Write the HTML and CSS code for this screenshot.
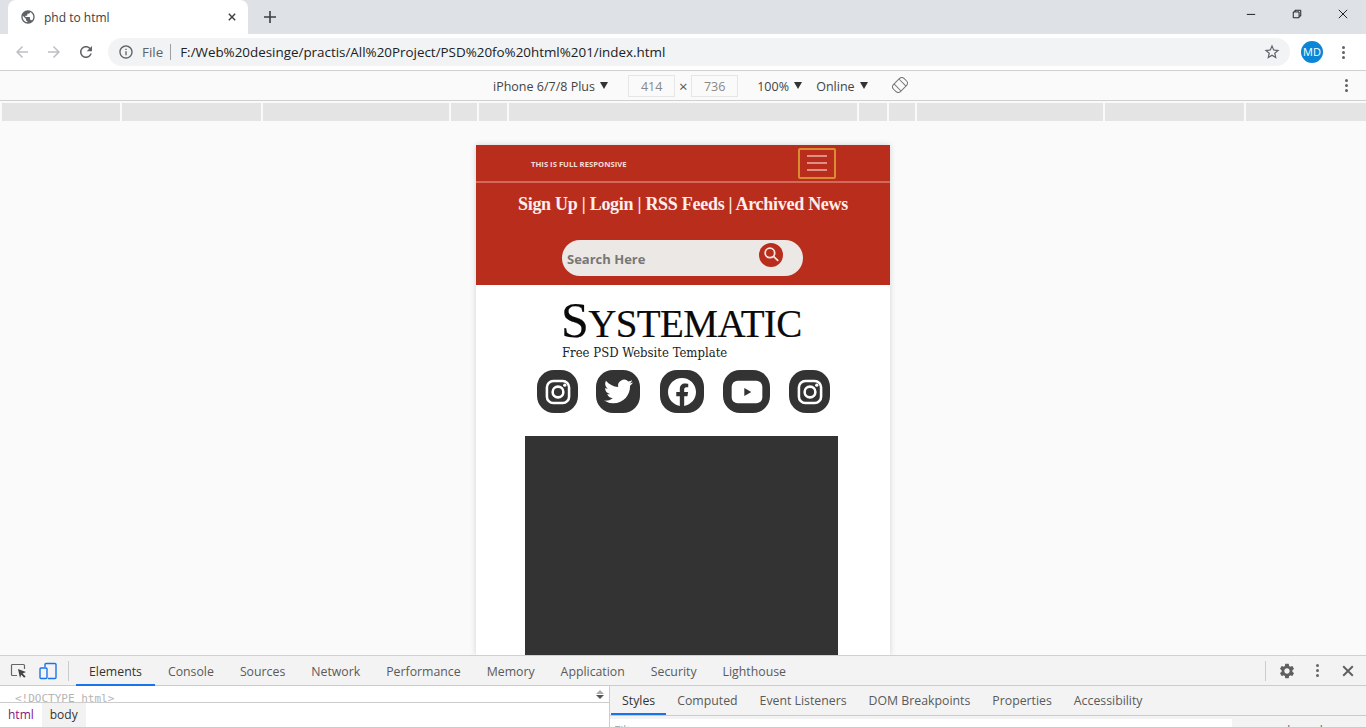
FILE: index.html
```html
<!DOCTYPE html>
<html lang="en">
<head>
  <meta charset="UTF-8" />
  <title>phd to html</title>
  <link rel="stylesheet" href="styles.css">
</head>
<body>
  <!-- browser tab strip -->
  <div class="tabstrip">
    <div class="tab">
      <svg class="tab-globe" viewBox="0 0 24 24"><path d="M12 2C6.48 2 2 6.48 2 12s4.48 10 10 10 10-4.48 10-10S17.52 2 12 2zm-1 17.93c-3.95-.49-7-3.85-7-7.93 0-.62.08-1.21.21-1.79L9 15v1c0 1.1.9 2 2 2v1.93zm6.9-2.54c-.26-.81-1-1.39-1.9-1.39h-1v-3c0-.55-.45-1-1-1H8v-2h2c.55 0 1-.45 1-1V7h2c1.1 0 2-.9 2-2v-.41c2.93 1.19 5 4.06 5 7.41 0 2.08-.8 3.97-2.1 5.39z"/></svg>
      <span class="tab-title">phd to html</span>
      <svg class="tab-close" viewBox="0 0 10 10"><path d="M1 1l8 8M9 1l-8 8"/></svg>
    </div>
    <svg class="tab-new" viewBox="0 0 12 12"><path d="M6 0v12M0 6h12"/></svg>
    <div class="win-btns">
      <svg viewBox="0 0 12 12"><path d="M1 6.5h10"/></svg>
      <svg viewBox="0 0 12 12"><path d="M1.5 3.5h7v7h-7zM3.5 3.5v-2h7v7h-2"/></svg>
      <svg viewBox="0 0 12 12"><path d="M1 1l10 10M11 1L1 11"/></svg>
    </div>
  </div>

  <!-- address bar -->
  <div class="toolbar">
    <svg class="nav-icon off" viewBox="0 0 24 24"><path d="M20 11H7.83l5.59-5.59L12 4l-8 8 8 8 1.41-1.41L7.83 13H20v-2z"/></svg>
    <svg class="nav-icon off" viewBox="0 0 24 24"><path d="M12 4l-1.41 1.41L16.17 11H4v2h12.17l-5.58 5.59L12 20l8-8z"/></svg>
    <svg class="nav-icon" viewBox="0 0 24 24"><path d="M17.65 6.35C16.2 4.9 14.21 4 12 4c-4.42 0-7.99 3.58-7.99 8s3.57 8 7.99 8c3.73 0 6.84-2.55 7.73-6h-2.08c-.82 2.33-3.04 4-5.65 4-3.31 0-6-2.69-6-6s2.69-6 6-6c1.66 0 3.14.69 4.22 1.78L13 11h7V4l-2.35 2.35z"/></svg>
    <div class="omnibox">
      <svg class="omni-info" viewBox="0 0 24 24"><path d="M11 7h2v2h-2zm0 4h2v6h-2zm1-9C6.48 2 2 6.48 2 12s4.48 10 10 10 10-4.48 10-10S17.52 2 12 2zm0 18c-4.41 0-8-3.59-8-8s3.59-8 8-8 8 3.59 8 8-3.59 8-8 8z"/></svg>
      <span class="omni-file">File</span>
      <span class="omni-url">F:/Web%20desinge/practis/All%20Project/PSD%20fo%20html%201/index.html</span>
      <svg class="omni-star" viewBox="0 0 24 24"><path d="M22 9.24l-7.19-.62L12 2 9.19 8.63 2 9.24l5.46 4.73L5.82 21 12 17.27 18.18 21l-1.63-7.03L22 9.24zM12 15.4l-3.76 2.27 1-4.28-3.32-2.88 4.38-.38L12 6.1l1.71 4.04 4.38.38-3.32 2.88 1 4.28L12 15.4z"/></svg>
    </div>
    <div class="avatar">MD</div>
    <div class="kebab"><i></i><i></i><i></i></div>
  </div>

  <!-- device toolbar -->
  <div class="devicebar">
    <span class="dev-item dev-name">iPhone 6/7/8 Plus <b class="caret"></b></span>
    <span class="dim-box">414</span>
    <span class="dim-x">×</span>
    <span class="dim-box">736</span>
    <span class="dev-item dev-zoom">100% <b class="caret"></b></span>
    <span class="dev-item dev-net">Online <b class="caret"></b></span>
    <svg class="rotate" viewBox="0 0 16 16"><g transform="rotate(45 8 8)"><rect x="3" y="0.5" width="10" height="15" rx="3.5"/><path d="M3 4.5h10M3 11.5h10"/></g></svg>
    <div class="kebab dev-kebab"><i></i><i></i><i></i></div>
  </div>

  <!-- media query ruler -->
  <div class="ruler">
    <i></i><i></i><i></i><i></i><i></i><i></i><i></i><i></i><i></i><i></i><i></i>
  </div>

  <!-- emulated page -->
  <div class="viewport">
    <div class="phone">
      <header class="site-head">
        <div class="topline">
          <span class="topline-text">THIS IS FULL RESPONSIVE</span>
          <button class="burger"><i></i><i></i><i></i></button>
        </div>
        <nav class="site-links">Sign Up | Login | RSS Feeds | Archived News</nav>
        <div class="search">
          <span class="search-text">Search Here</span>
          <span class="search-btn">
            <svg viewBox="0 0 24 24"><circle cx="10" cy="10" r="6"/><path d="M14.5 14.5l6 5.5"/></svg>
          </span>
        </div>
      </header>

      <div class="brand">
        <div class="brand-name"><span class="brand-cap">S</span>YSTEMATIC</div>
        <div class="brand-sub">Free PSD Website Template</div>
      </div>

      <div class="socials">
        <span class="soc soc-insta">
          <svg viewBox="0 0 24 24"><rect x="2.5" y="2.5" width="19" height="19" rx="5.5" class="ln"/><circle cx="12" cy="12" r="4.6" class="ln"/><circle cx="17.8" cy="6.2" r="1.4" class="fl"/></svg>
        </span>
        <span class="soc soc-tw">
          <svg viewBox="0 0 24 24"><path class="fl" d="M23.953 4.57a10 10 0 01-2.825.775 4.958 4.958 0 002.163-2.723c-.951.555-2.005.959-3.127 1.184a4.92 4.92 0 00-8.384 4.482C7.69 8.095 4.067 6.13 1.64 3.162a4.822 4.822 0 00-.666 2.475c0 1.71.87 3.213 2.188 4.096a4.904 4.904 0 01-2.228-.616v.06a4.923 4.923 0 003.946 4.827 4.996 4.996 0 01-2.212.085 4.936 4.936 0 004.604 3.417 9.867 9.867 0 01-6.102 2.105c-.39 0-.779-.023-1.17-.067a13.995 13.995 0 007.557 2.209c9.053 0 13.998-7.496 13.998-13.985 0-.21 0-.42-.015-.63A9.935 9.935 0 0024 4.59z"/></svg>
        </span>
        <span class="soc soc-fb">
          <svg viewBox="0 0 24 24"><path class="fl" d="M24 12.073c0-6.627-5.373-12-12-12s-12 5.373-12 12c0 5.99 4.388 10.954 10.125 11.854v-8.385H7.078v-3.47h3.047V9.43c0-3.007 1.792-4.669 4.533-4.669 1.312 0 2.686.235 2.686.235v2.953H15.83c-1.491 0-1.956.925-1.956 1.874v2.25h3.328l-.532 3.47h-2.796v8.385C19.612 23.027 24 18.062 24 12.073z"/></svg>
        </span>
        <span class="soc soc-yt">
          <svg viewBox="0 0 24 24"><rect x="0.5" y="3.5" width="23" height="17" rx="4.5" class="fl"/><path d="M10 9l5.2 3-5.2 3z" class="dk"/></svg>
        </span>
        <span class="soc soc-insta">
          <svg viewBox="0 0 24 24"><rect x="2.5" y="2.5" width="19" height="19" rx="5.5" class="ln"/><circle cx="12" cy="12" r="4.6" class="ln"/><circle cx="17.8" cy="6.2" r="1.4" class="fl"/></svg>
        </span>
      </div>

      <div class="dark-block"></div>
    </div>
  </div>

  <!-- devtools -->
  <div class="devtools">
    <div class="dt-tabs">
      <svg class="dt-inspect" viewBox="0 0 18 18"><path class="dt-line" d="M7 13.5H2.5a1 1 0 01-1-1v-9a1 1 0 011-1h11a1 1 0 011 1V7"/><path class="dt-arrow" d="M8 7l8 3-3.4 1.4 3 3-1.4 1.4-3-3L10 16z"/></svg>
      <svg class="dt-device" viewBox="0 0 18 18"><path d="M6 5V2.5a1 1 0 011-1h9a1 1 0 011 1v13a1 1 0 01-1 1H9"/><rect x="1" y="6" width="7" height="10.5" rx="1"/></svg>
      <span class="dt-sep"></span>
      <span class="dt-tab is-on">Elements</span>
      <span class="dt-tab">Console</span>
      <span class="dt-tab">Sources</span>
      <span class="dt-tab">Network</span>
      <span class="dt-tab">Performance</span>
      <span class="dt-tab">Memory</span>
      <span class="dt-tab">Application</span>
      <span class="dt-tab">Security</span>
      <span class="dt-tab">Lighthouse</span>
      <div class="dt-right">
        <span class="dt-sep2"></span>
        <svg class="dt-gear" viewBox="0 0 24 24"><path d="M19.14 12.94c.04-.3.06-.61.06-.94 0-.32-.02-.64-.07-.94l2.03-1.58c.18-.14.23-.41.12-.61l-1.92-3.32c-.12-.22-.37-.29-.59-.22l-2.39.96c-.5-.38-1.03-.7-1.62-.94l-.36-2.54c-.04-.24-.24-.41-.48-.41h-3.84c-.24 0-.43.17-.47.41l-.36 2.54c-.59.24-1.13.57-1.62.94l-2.39-.96c-.22-.08-.47 0-.59.22L2.74 8.87c-.12.21-.08.47.12.61l2.03 1.58c-.05.3-.09.63-.09.94s.02.64.07.94l-2.03 1.58c-.18.14-.23.41-.12.61l1.92 3.32c.12.22.37.29.59.22l2.39-.96c.5.38 1.03.7 1.62.94l.36 2.54c.05.24.24.41.48.41h3.84c.24 0 .44-.17.47-.41l.36-2.54c.59-.24 1.13-.56 1.62-.94l2.39.96c.22.08.47 0 .59-.22l1.92-3.32c.12-.22.07-.47-.12-.61l-2.01-1.58zM12 15.6c-1.98 0-3.6-1.62-3.6-3.6s1.62-3.6 3.6-3.6 3.6 1.62 3.6 3.6-1.62 3.6-3.6 3.6z"/></svg>
        <div class="kebab dt-kebab"><i></i><i></i><i></i></div>
        <svg class="dt-close" viewBox="0 0 10 10"><path d="M1 1l8 8M9 1l-8 8"/></svg>
      </div>
    </div>
    <div class="dt-panes">
      <div class="dt-left">
        <div class="dom-row">
          <code class="doctype">&lt;!DOCTYPE html&gt;</code>
          <span class="dom-scroll"><b class="up"></b><b class="down"></b></span>
        </div>
        <div class="crumbs"><span class="crumb-html">html</span><span class="crumb-body">body</span></div>
      </div>
      <div class="dt-side">
        <div class="side-tabs">
          <span class="side-tab is-on">Styles</span>
          <span class="side-tab">Computed</span>
          <span class="side-tab">Event Listeners</span>
          <span class="side-tab">DOM Breakpoints</span>
          <span class="side-tab">Properties</span>
          <span class="side-tab">Accessibility</span>
        </div>
        <div class="filter-row">
          <div class="filter-box">Filter</div>
          <div class="filter-rest">:hov .cls +</div>
        </div>
      </div>
    </div>
  </div>
</body>
</html>
```

FILE: styles.css
```css
:root {
  --red: #b92d1d;
  --dark: #333;
  --chrome: #dee1e6;
  --line: #d0d0d0;
  --panel: #f3f3f3;
  --blue: #1a73e8;
}
* {
  box-sizing: border-box;
}
html, body {
  margin: 0;
  height: 100%;
}
body {
  display: flex;
  flex-direction: column;
  height: 728px;
  overflow: hidden;
  font-family: "Open Sans", "Noto Sans", sans-serif;
  color: #333;
  background: #fff;
}
svg {
  display: block;
  flex: none;
}

/* tab strip */
.tabstrip {
  height: 34px;
  flex: none;
  background: var(--chrome);
  display: flex;
  align-items: flex-start;
}
.tab {
  width: 240px;
  height: 34px;
  margin-left: 8px;
  background: #fff;
  border-radius: 8px 8px 0 0;
  display: flex;
  align-items: center;
  padding-left: 12px;
}
.tab-globe {
  width: 16px;
  height: 16px;
  fill: #5f6368;
}
.tab-title {
  margin-left: 8px;
  font-size: 12px;
  color: #3c4043;
}
.tab-close {
  width: 8px;
  height: 8px;
  margin-left: auto;
  margin-right: 12px;
  fill: none;
  stroke: #3c4043;
  stroke-width: 1.8;
}
.tab-new {
  width: 12px;
  height: 12px;
  margin: 11px 0 0 16px;
  fill: none;
  stroke: #3c4043;
  stroke-width: 1.6;
}
.win-btns {
  margin-left: auto;
  display: flex;
  gap: 36px;
  padding: 9px 18px 0 0;
}
.win-btns svg {
  width: 10px;
  height: 10px;
  fill: none;
  stroke: #111;
  stroke-width: 1.1;
}

/* address bar */
.toolbar {
  height: 37px;
  flex: none;
  background: #fff;
  border-bottom: 1px solid var(--line);
  display: flex;
  align-items: center;
  padding-left: 13px;
}
.nav-icon {
  width: 18px;
  height: 18px;
  margin-right: 14px;
  fill: #5f6368;
}
.nav-icon.off {
  fill: #bcbfc3;
}
.nav-icon:nth-child(3) {
  margin-right: 0;
}
.omnibox {
  width: 1182px;
  height: 28px;
  margin-left: 13px;
  background: #f1f3f4;
  border-radius: 14px;
  display: flex;
  align-items: center;
  padding-left: 10px;
}
.omni-info {
  width: 16px;
  height: 16px;
  fill: #5f6368;
}
.omni-file {
  margin-left: 8px;
  padding-right: 7px;
  border-right: 1px solid #9aa0a6;
  font-size: 13.4px;
  line-height: 16px;
  color: #5f6368;
}
.omni-url {
  margin-left: 9px;
  font-size: 13.4px;
  color: #202124;
}
.omni-star {
  width: 18px;
  height: 18px;
  margin-left: auto;
  margin-right: 9px;
  fill: #5f6368;
}
.avatar {
  width: 22px;
  height: 22px;
  margin-left: 11px;
  border-radius: 50%;
  background: #0b86d6;
  color: #fff;
  font-size: 11px;
  line-height: 22px;
  text-align: center;
}
.kebab {
  display: flex;
  flex-direction: column;
  gap: 2px;
  margin-left: 19px;
}
.kebab i {
  width: 3px;
  height: 3px;
  border-radius: 50%;
  background: #5f6368;
}

/* device toolbar */
.devicebar {
  height: 30px;
  flex: none;
  background: #fafafa;
  border-bottom: 1px solid var(--line);
  display: flex;
  align-items: center;
  padding-left: 493px;
  font-size: 12.5px;
  color: #444;
}
.dev-item {
  display: flex;
  align-items: center;
  white-space: pre;
  padding-top: 1px;
}
.caret {
  width: 0;
  height: 0;
  margin: -2px 0 0 2px;
  border-left: 4.5px solid transparent;
  border-right: 4.5px solid transparent;
  border-top: 7px solid #333;
}
.dim-box {
  width: 47px;
  height: 22px;
  border: 1px solid #e6e6e6;
  line-height: 21px;
  text-align: center;
  color: #888;
}
.dev-name .caret {
  margin-right: 20px;
}
.dim-x {
  width: 16px;
  text-align: center;
  color: #555;
  font-size: 15px;
}
.dev-zoom {
  margin-left: 19px;
}
.dev-net {
  margin-left: 14px;
}
.rotate {
  width: 16px;
  height: 16px;
  margin: -2px 0 0 24px;
  fill: none;
  stroke: #777;
  stroke-width: 1;
}
.dev-kebab {
  margin-left: auto;
  margin-right: 18px;
}

/* ruler */
.ruler {
  height: 21px;
  flex: none;
  padding: 2px 0 0 2px;
  background: #fafafa;
  display: grid;
  grid-template-columns: 118px 139px 186px 26px 28px 348px 28px 26px 186px 139px 120px;
  gap: 2px;
}
.ruler i {
  background: #e4e4e4;
  height: 18px;
}

/* page */
.viewport {
  flex: 1;
  min-height: 0;
  padding-top: 23px;
  background: #fafafa;
  display: flex;
  justify-content: center;
  overflow: hidden;
}
.phone {
  width: 414px;
  background: #fff;
  box-shadow: 0 0 6px rgba(0, 0, 0, 0.16);
  overflow: hidden;
}
.site-head {
  height: 140px;
  background: var(--red);
}
.topline {
  height: 38px;
  border-bottom: 2px solid #d4695b;
  display: flex;
  align-items: center;
  padding-left: 55px;
}
.topline-text {
  margin-top: 2px;
  font-size: 7.7px;
  font-weight: 700;
  color: #f5dcd8;
}
.burger {
  width: 38px;
  height: 31px;
  margin-left: auto;
  margin-right: 54px;
  padding: 0;
  background: none;
  border: 2px solid #d98c32;
  border-radius: 2px;
  display: flex;
  flex-direction: column;
  align-items: center;
  justify-content: center;
  gap: 5px;
}
.burger i {
  width: 20px;
  height: 2px;
  background: #df8f85;
}
.site-links {
  margin-top: 9px;
  font-family: "Liberation Serif", serif;
  font-size: 18px;
  font-weight: 700;
  letter-spacing: -0.28px;
  line-height: 24px;
  color: #fbeeec;
  text-align: center;
}
.search {
  width: 241px;
  height: 36px;
  margin: 24px 0 0 86px;
  background: #ece8e5;
  border-radius: 18px;
  display: flex;
  align-items: center;
  padding: 0 20px 7px 5px;
}
.search-text {
  font-size: 13px;
  font-weight: 700;
  color: #777;
  margin-top: 9px;
}
.search-btn {
  width: 24px;
  height: 24px;
  margin-left: auto;
  border-radius: 50%;
  background: var(--red);
  display: flex;
  align-items: center;
  justify-content: center;
}
.search-btn svg {
  width: 19px;
  height: 19px;
  fill: none;
  stroke: #f6e6e3;
  stroke-width: 2.2;
}
.brand {
  width: 241px;
  margin: 13px 0 0 86px;
}
.brand-name {
  margin-left: -1px;
  font-family: "Liberation Serif", serif;
  font-size: 39px;
  letter-spacing: -0.6px;
  line-height: 44px;
  color: #0a0a0a;
  white-space: nowrap;
  -webkit-text-stroke: 0.2px #0a0a0a;
}
.brand-cap {
  font-size: 50px;
}
.brand-sub {
  margin-top: -1px;
  font-family: "DejaVu Serif Condensed", "DejaVu Serif", serif;
  font-size: 13px;
  line-height: 16px;
  color: #222;
}
.socials {
  display: flex;
  align-items: center;
  margin: 9px 0 0 61px;
}
.soc {
  height: 43px;
  margin-left: 19px;
  background: var(--dark);
  border-radius: 17px;
  display: flex;
  align-items: center;
  justify-content: center;
}
.soc:first-child {
  margin-left: 0;
}
.soc-insta {
  width: 41px;
}
.soc-tw {
  width: 44px;
  margin-left: 18px;
}
.soc-fb {
  width: 44px;
  margin-left: 20px;
}
.soc-yt {
  width: 47px;
}
.soc svg {
  width: 27px;
  height: 27px;
}
.soc .ln {
  fill: none;
  stroke: #fff;
  stroke-width: 2.2;
}
.soc .fl {
  fill: #fff;
}
.soc .dk {
  fill: var(--dark);
}
.soc-insta svg {
  width: 28px;
  height: 28px;
}
.soc-yt svg {
  width: 32px;
  height: 32px;
}
.soc-fb svg {
  width: 28px;
  height: 28px;
}
.soc-tw svg {
  width: 29px;
  height: 29px;
}
.dark-block {
  width: 313px;
  height: 400px;
  margin: 23px 0 0 49px;
  background: var(--dark);
}

/* devtools */
.devtools {
  height: 73px;
  flex: none;
  background: #fff;
  border-top: 1px solid var(--line);
}
.dt-tabs {
  height: 30px;
  background: var(--panel);
  border-bottom: 1px solid #ccc;
  display: flex;
  align-items: center;
  padding-left: 10px;
}
.dt-inspect {
  width: 18px;
  height: 18px;
}
.dt-line {
  fill: none;
  stroke: #666;
  stroke-width: 1.2;
}
.dt-arrow {
  fill: #444;
}
.dt-device {
  width: 18px;
  height: 18px;
  margin-left: 11px;
  fill: none;
  stroke: var(--blue);
  stroke-width: 1.4;
}
.dt-sep {
  width: 1px;
  height: 20px;
  margin: 0 7px 0 11px;
  background: #ccc;
}
.dt-tab {
  height: 30px;
  padding: 0 13px;
  font-size: 12.3px;
  line-height: 31px;
  color: #5a5a5a;
}
.dt-tab.is-on {
  color: #333;
  border-bottom: 2px solid var(--blue);
}
.dt-right {
  margin-left: auto;
  display: flex;
  align-items: center;
}
.dt-sep2 {
  width: 1px;
  height: 20px;
  margin-right: 12px;
  background: #ccc;
}
.dt-gear {
  width: 18px;
  height: 18px;
  fill: #5f5f5f;
}
.dt-kebab {
  margin-left: 20px;
}
.dt-kebab i {
  background: #666;
}
.dt-close {
  width: 12px;
  height: 12px;
  margin: 0 12px 0 23px;
  fill: none;
  stroke: #5f5f5f;
  stroke-width: 1.6;
}
.dt-panes {
  height: 42px;
  display: flex;
  border-bottom: 1px solid #ccc;
}
.dt-left {
  width: 610px;
  border-right: 1px solid #ccc;
}
.dom-row {
  height: 17px;
  border-bottom: 1px solid #ccc;
  display: flex;
  overflow: hidden;
  padding-left: 15px;
}
.doctype {
  font-family: "DejaVu Sans Mono", monospace;
  font-size: 11px;
  line-height: 25px;
  color: #b5b5b5;
}
.dom-scroll {
  margin-left: auto;
  margin-right: 2px;
  width: 14px;
  background: #fff;
  display: flex;
  flex-direction: column;
  align-items: center;
  gap: 1px;
  padding-top: 4px;
}
.dom-scroll b {
  width: 0;
  height: 0;
  border-left: 4px solid transparent;
  border-right: 4px solid transparent;
}
.dom-scroll .up {
  border-bottom: 4px solid #aaa;
}
.dom-scroll .down {
  border-top: 4px solid #555;
}
.crumbs {
  height: 24px;
  display: flex;
  font-size: 12px;
  line-height: 24px;
}
.crumb-html {
  padding: 0 8px;
  color: #881280;
}
.crumb-body {
  padding: 0 8px;
  background: #f2f2f2;
  color: #333;
}
.dt-side {
  flex: 1;
  overflow: hidden;
}
.side-tabs {
  height: 30px;
  background: var(--panel);
  border-bottom: 1px solid #ccc;
  display: flex;
  padding-left: 1px;
}
.side-tab {
  padding: 0 11px;
  font-size: 12.3px;
  line-height: 29px;
  color: #5a5a5a;
}
.side-tab.is-on {
  color: #333;
  border-bottom: 2px solid var(--blue);
}
.filter-row {
  height: 11px;
  display: flex;
  background: var(--panel);
  padding-top: 3px;
  overflow: hidden;
}
.filter-box {
  width: 622px;
  padding: 3px 0 0 4px;
  background: #fff;
  font-size: 12px;
  color: #aaa;
}
.filter-rest {
  padding: 3px 0 0 52px;
  font-size: 12px;
  color: #666;
  white-space: nowrap;
}
```
